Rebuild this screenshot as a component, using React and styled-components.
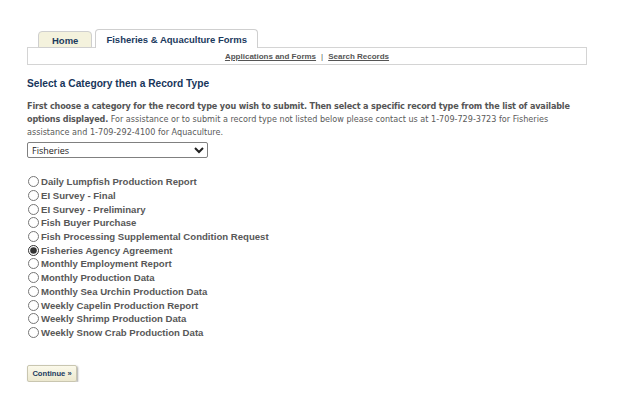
import React, { useState } from "react";
import styled, { createGlobalStyle } from "styled-components";

const GlobalStyle = createGlobalStyle`
  html, body {
    margin: 0;
    padding: 0;
    background: #ffffff;
  }
  body {
    font-family: "Liberation Sans", Arial, sans-serif;
  }
`;

const recordTypes = [
  "Daily Lumpfish Production Report",
  "EI Survey - Final",
  "EI Survey - Preliminary",
  "Fish Buyer Purchase",
  "Fish Processing Supplemental Condition Request",
  "Fisheries Agency Agreement",
  "Monthly Employment Report",
  "Monthly Production Data",
  "Monthly Sea Urchin Production Data",
  "Weekly Capelin Production Report",
  "Weekly Shrimp Production Data",
  "Weekly Snow Crab Production Data",
];

function App() {
  const [selected, setSelected] = useState("Fisheries Agency Agreement");
  const [category, setCategory] = useState("Fisheries");

  return (
    <Page>
      <GlobalStyle />
      <TabBar>
        <Tab>Home</Tab>
        <Tab active>Fisheries &amp; Aquaculture Forms</Tab>
      </TabBar>
      <SubNav>
        <NavLink href="#">Applications and Forms</NavLink>
        <Divider>|</Divider>
        <NavLink href="#">Search Records</NavLink>
      </SubNav>

      <Heading>Select a Category then a Record Type</Heading>
      <Intro>
        <strong>
          First choose a category for the record type you wish to submit. Then
          select a specific record type from the list of available options
          displayed.
        </strong>{" "}
        For assistance or to submit a record type not listed below please
        contact us at 1-709-729-3723 for Fisheries assistance and
        1-709-292-4100 for Aquaculture.
      </Intro>

      <CategorySelect
        value={category}
        onChange={(e) => setCategory(e.target.value)}
      >
        <option>Fisheries</option>
        <option>Aquaculture</option>
      </CategorySelect>

      <RadioList>
        {recordTypes.map((name) => (
          <RadioRow key={name}>
            <Radio
              type="radio"
              name="recordType"
              checked={selected === name}
              onChange={() => setSelected(name)}
            />
            {name}
          </RadioRow>
        ))}
      </RadioList>

      <ContinueButton>Continue &raquo;</ContinueButton>
    </Page>
  );
}

export default App;

const Page = styled.div`
  width: 560px;
  padding: 29px 0 0 27px;
`;

const TabBar = styled.div`
  display: flex;
  align-items: flex-end;
  gap: 3px;
  padding-left: 11px;
  height: 19px;
  position: relative;
  z-index: 1;
  margin-bottom: -1px;
`;

const Tab = styled.div`
  box-sizing: border-box;
  height: ${(p) => (p.active ? "19px" : "17px")};
  padding: ${(p) => (p.active ? "4px 10px 0" : "3px 13px 0")};
  background: ${(p) => (p.active ? "#ffffff" : "#f4f2dd")};
  border: 1px solid #cfcfcf;
  border-bottom: ${(p) => (p.active ? "none" : "1px solid #cfcfcf")};
  border-radius: 4px 4px 0 0;
  color: #1b3a5e;
  font-size: 9.5px;
  font-weight: bold;
  line-height: 11px;
  white-space: nowrap;
`;

const SubNav = styled.div`
  box-sizing: border-box;
  height: 18px;
  border: 1px solid #d4d4d4;
  display: flex;
  justify-content: center;
  align-items: center;
  gap: 5px;
  font-size: 8px;
  font-weight: bold;
  color: #555555;
`;

const NavLink = styled.a`
  color: #555555;
  text-decoration: underline;
`;

const Divider = styled.span`
  color: #555555;
  font-weight: normal;
`;

const Heading = styled.h2`
  margin: 12px 0 0;
  font-size: 10.2px;
  line-height: 14px;
  font-weight: bold;
  color: #17355a;
`;

const Intro = styled.p`
  margin: 9px 0 0;
  font-family: "DejaVu Sans", Verdana, sans-serif;
  font-size: 8.1px;
  line-height: 13px;
  color: #5a5a5a;

  strong {
    color: #555555;
    letter-spacing: -0.15px;
  }
`;

const CategorySelect = styled.select`
  display: block;
  box-sizing: border-box;
  margin-top: 3px;
  width: 181px;
  height: 16px;
  padding: 0;
  font-family: "Open Sans", sans-serif;
  font-size: 9px;
  color: #222222;
  border: 1px solid #808080;
  border-radius: 2px;
  background: #ffffff;
`;

const RadioList = styled.div`
  margin-top: 17px;
  display: flex;
  flex-direction: column;
`;

const RadioRow = styled.label`
  display: flex;
  align-items: center;
  height: 13.7px;
  font-size: 9.6px;
  font-weight: bold;
  color: #585858;
  white-space: nowrap;
`;

const Radio = styled.input`
  width: 11px;
  height: 11px;
  margin: 0 2px 0 1px;
  accent-color: #333333;
`;

const ContinueButton = styled.button`
  margin-top: 26px;
  box-sizing: border-box;
  width: 50px;
  height: 17px;
  padding: 0;
  font-family: "Liberation Sans", Arial, sans-serif;
  font-size: 7.6px;
  font-weight: bold;
  color: #1b3a5e;
  background: linear-gradient(#fbf9ea, #ece8cf);
  border: 1px solid #c9c6b0;
  border-radius: 2px;
  box-shadow: 1px 1px 2px rgba(0, 0, 0, 0.35);
`;
